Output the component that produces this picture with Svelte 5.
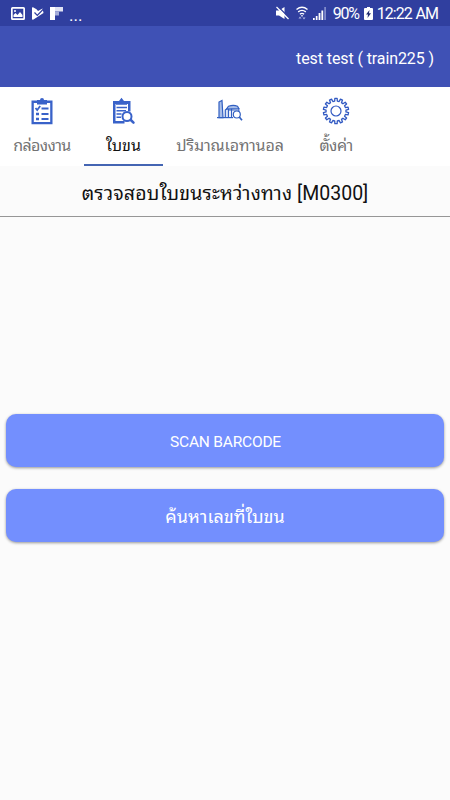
<script lang="ts">
	type Tab = { id: string; label: string; width: number };

	const tabs: Tab[] = [
		{ id: 'inbox', label: 'กล่องงาน', width: 84 },
		{ id: 'waybill', label: 'ใบขน', width: 79 },
		{ id: 'ethanol', label: 'ปริมาณเอทานอล', width: 134 },
		{ id: 'settings', label: 'ตั้งค่า', width: 78 }
	];

	let active = $state('waybill');

	function gearPath(teeth: number, outer: number, inner: number) {
		const step = (Math.PI * 2) / teeth;
		const points: string[] = [];
		for (let i = 0; i < teeth; i++) {
			const a = i * step - Math.PI / 2;
			for (const [r, offset] of [
				[inner, -0.29],
				[outer, -0.2],
				[outer, 0.2],
				[inner, 0.29]
			]) {
				const t = a + offset * step;
				points.push(`${(14 + r * Math.cos(t)).toFixed(2)} ${(14 + r * Math.sin(t)).toFixed(2)}`);
			}
		}
		return `M${points.join('L')}Z`;
	}

	const gear = gearPath(14, 12.7, 10);
</script>

<div class="screen">
	<div class="status-bar">
		<div class="notifications">
			<svg width="14" height="13" viewBox="0 0 14 13">
				<path
					fill="#fff"
					fill-rule="evenodd"
					d="M1.500 0h11Q14 0 14 1.500v10q0 1.500-1.500 1.500h-11Q0 13 0 11.500v-10Q0 0 1.500 0ZM1.700 1.800v9.500h10.600V1.800Z"
				/>
				<path fill="#fff" d="M2.500 10V8l2-2 2 2 2.500-3 2.500 3v2Z" />
				<circle cx="4" cy="4" r="1" fill="#fff" />
			</svg>
			<svg width="13" height="13" viewBox="0 0 13 13">
				<path fill="#fff" d="M1 1q0-1 1-.7l3.500 2L7 4l4.500-2.500L12.500 6 2.500 12.500Q1 13 1 12Z" />
				<path fill="none" stroke="#303f9f" stroke-width="1.200" d="M3.500 5.500l2.800 2.800L12.500 2" />
			</svg>
			<svg width="13" height="13" viewBox="0 0 13 13">
				<path fill="#fff" d="M0 0h5v13H0Z" />
				<path fill="#dfe2f3" d="M5 0h8v4.500H5Z" />
				<path fill="#a5add9" d="M5 4.500h4v4H5Z" />
			</svg>
			<span class="more">...</span>
		</div>
		<div class="system">
			<svg class="mute" width="14" height="14" viewBox="0 0 14 14">
				<path fill="#fff" d="M1 4.500h3L9.500 1v12L4 9.500H1Z" />
				<path stroke="#303f9f" stroke-width="1.300" d="M2.500 0l12 12" />
				<path stroke="#fff" stroke-width="1.300" d="M1.500 1l12 12" />
			</svg>
			<svg class="wifi" width="12" height="14" viewBox="0 0 12 14">
				<g fill="none" stroke="#fff" stroke-width="1.400">
					<path d="M.5 3.500Q6-1 11.500 3.500M2.200 5.900q3.800-3 7.600 0M3.900 8.200q2.100-1.700 4.200 0" />
				</g>
				<path fill="#fff" d="M4.800 9.200h2.400L6 11Z" />
				<path fill="#aeb6e2" d="M2.500 12.500L4 10.500l1.500 2ZM6.500 11.500h3L8 13.500Z" />
			</svg>
			<svg class="signal" width="13" height="13" viewBox="0 0 13 13">
				<path fill="#fff" d="M0 11h1.700v2H0ZM2.800 9h1.700v4H2.800ZM5.600 6h1.800v7H5.600ZM8.400 3.500h1.800V13H8.400Z" />
				<path fill="#7e89ca" d="M11.200 0H13v13h-1.800Z" />
			</svg>
			<span class="percent">90%</span>
			<svg class="battery" width="9" height="13" viewBox="0 0 9 13">
				<path fill="#fff" d="M3 0h3v1h2q1 0 1 1v10q0 1-1 1H1q-1 0-1-1V2q0-1 1-1h2Z" />
				<path fill="#202b70" d="M5.500 3L2 7.500h2L3.500 11 7 6.300H5Z" />
			</svg>
			<span class="clock">12:22 AM</span>
		</div>
	</div>

	<header class="app-bar">
		<span>test test ( train225 )</span>
	</header>

	<nav class="tabs">
		{#each tabs as tab (tab.id)}
			<button
				class="tab {tab.id}"
				class:active={active === tab.id}
				style:width="{tab.width}px"
				onclick={() => (active = tab.id)}
			>
				<svg width="28" height="28" viewBox="0 0 28 28">
					{#if tab.id === 'inbox'}
						<path
							fill="#3962c9"
							fill-rule="evenodd"
							d="M3.500 3.500h21v23.700h-21ZM5.800 6v19h16.400V6Z"
						/>
						<path fill="#3962c9" d="M9 3h3q0-2 2-2t2 2h3v4.500H9Z" />
						<g fill="none" stroke="#3962c9" stroke-width="1.800">
							<path d="M7.500 11l1.700 2 3-4M13.500 11.500H20.500M13.500 17H20.500M13.500 22H20.500" />
							<path stroke-width="2.400" d="M8 17h3M8 22h3" />
						</g>
					{:else if tab.id === 'waybill'}
						<path
							fill="#3962c9"
							fill-rule="evenodd"
							d="M3 4h17.500v10.500h-2.500V7H5.500v17H14.500v2.500H3Z"
						/>
						<path fill="#3962c9" d="M6 7.800V4h3l2.500-3.300L14 4h3v3.800Z" />
						<path stroke="#3962c9" stroke-width="1.600" d="M6.500 10.500h10.500M6.500 13.700h9.500M6.500 17h5M6.500 20.300h4.500" />
						<circle cx="17" cy="19.500" r="4.500" fill="#fff" stroke="#3962c9" stroke-width="2" />
						<path stroke="#3962c9" stroke-width="2.500" stroke-linecap="round" d="M20.800 23l2.700 2.700" />
					{:else if tab.id === 'ethanol'}
						<g fill="none" stroke="#3260c2" stroke-width="1.200">
							<path fill="#a9bfe9" d="M3 20.600V5L6 3.500l1 17.100Z" />
							<path d="M1 20.600h16" />
							<path fill="#dbe5f7" d="M9.300 20.500v-7.500l3.200-2.500v10Z" />
							<path d="M15.500 10v10.500M13 13h9" />
							<path fill="#a9bfe9" d="M10.500 12l2-2.800q5-1.600 9 0l1.300 2.300Z" />
							<path d="M22.800 11.500V15" />
							<circle cx="20.800" cy="17.500" r="3.500" fill="#fff" />
							<path stroke-width="1.700" d="M23.300 20l2.700 3.300" />
						</g>
					{:else}
						<path d={gear} fill="none" stroke="#3159c2" stroke-width="1.300" stroke-linejoin="round" />
						<circle cx="14" cy="14" r="5" fill="none" stroke="#3159c2" stroke-width="1.200" />
					{/if}
				</svg>
				<span class="label">{tab.label}</span>
			</button>
		{/each}
	</nav>

	<h1><span>ตรวจสอบใบขนระหว่างทาง</span> [M0300]</h1>

	<main>
		<button class="action scan">SCAN BARCODE</button>
		<button class="action search">ค้นหาเลขที่ใบขน</button>
	</main>
</div>

<style>
	:global(body) {
		margin: 0;
		background: #fbfbfb;
	}

	.screen {
		height: 800px;
		display: flex;
		flex-direction: column;
		background: #fbfbfb;
		font-family: Roboto, 'Noto Sans Thai Looped', Loma, Waree, 'Noto Sans Thai', 'Noto Sans', sans-serif;
	}

	button {
		border: 0;
		font-family: inherit;
		cursor: pointer;
	}

	.status-bar {
		height: 26px;
		flex: none;
		display: flex;
		justify-content: space-between;
		align-items: center;
		padding: 0 12px 0 11px;
		background: #303f9f;
		color: #fff;
		box-sizing: border-box;
	}

	.notifications,
	.system {
		display: flex;
		align-items: center;
	}

	.notifications {
		gap: 6px;
	}

	.more {
		font-size: 17px;
		line-height: 20px;
		padding-top: 3px;
	}

	.mute {
		margin-right: 7px;
	}

	.wifi {
		margin-right: 5px;
	}

	.signal {
		margin-right: 7px;
	}

	.percent,
	.clock {
		font-family: Roboto, sans-serif;
		font-size: 16px;
		line-height: 28px;
		padding-top: 1px;
		white-space: nowrap;
	}

	.percent {
		letter-spacing: -1.2px;
		margin-right: 5px;
	}

	.clock {
		letter-spacing: -1px;
		word-spacing: 1px;
		margin-left: 4px;
	}

	.app-bar {
		height: 61px;
		flex: none;
		display: flex;
		align-items: center;
		justify-content: flex-end;
		padding: 3px 16px 0 0;
		box-sizing: border-box;
		background: #3f51b5;
		color: #fff;
		font-size: 16px;
		letter-spacing: -0.1px;
	}

	.tabs {
		height: 79px;
		flex: none;
		display: flex;
		background: #fff;
	}

	.tab {
		display: flex;
		flex-direction: column;
		align-items: center;
		padding: 10px 0 0;
		box-sizing: border-box;
		background: none;
		border-bottom: 2px solid transparent;
		color: #737373;
		font-size: 16px;
	}

	.tab svg {
		flex: none;
	}

	.tab.active {
		border-bottom-color: #4465b3;
		color: #111;
	}

	.label {
		line-height: 24px;
		margin-top: 9px;
		white-space: nowrap;
	}

	.inbox .label {
		letter-spacing: -0.6px;
	}

	.ethanol .label {
		letter-spacing: -0.15px;
	}

	.settings .label {
		letter-spacing: -0.5px;
	}

	h1 {
		height: 51px;
		flex: none;
		margin: 0;
		box-sizing: border-box;
		border-bottom: 1px solid #969696;
		text-align: center;
		font-size: 19.5px;
		font-weight: 400;
		line-height: 55px;
		color: #111;
		white-space: nowrap;
	}

	h1 span {
		letter-spacing: 0.15px;
	}

	main {
		flex: 1;
		display: flex;
		flex-direction: column;
		gap: 22px;
		padding: 197px 6px 0;
	}

	.action {
		height: 53px;
		flex: none;
		padding: 3px 0 0;
		border-radius: 10px;
		background: #738ffe;
		color: #fff;
		font-size: 15.5px;
		line-height: 50px;
		box-shadow: 0 1px 3px rgba(0, 0, 0, 0.4);
	}

	.scan {
		padding: 3px 0 0 1px;
		letter-spacing: -0.2px;
	}

	.search {
		padding-top: 2px;
		font-size: 18px;
	}
</style>
